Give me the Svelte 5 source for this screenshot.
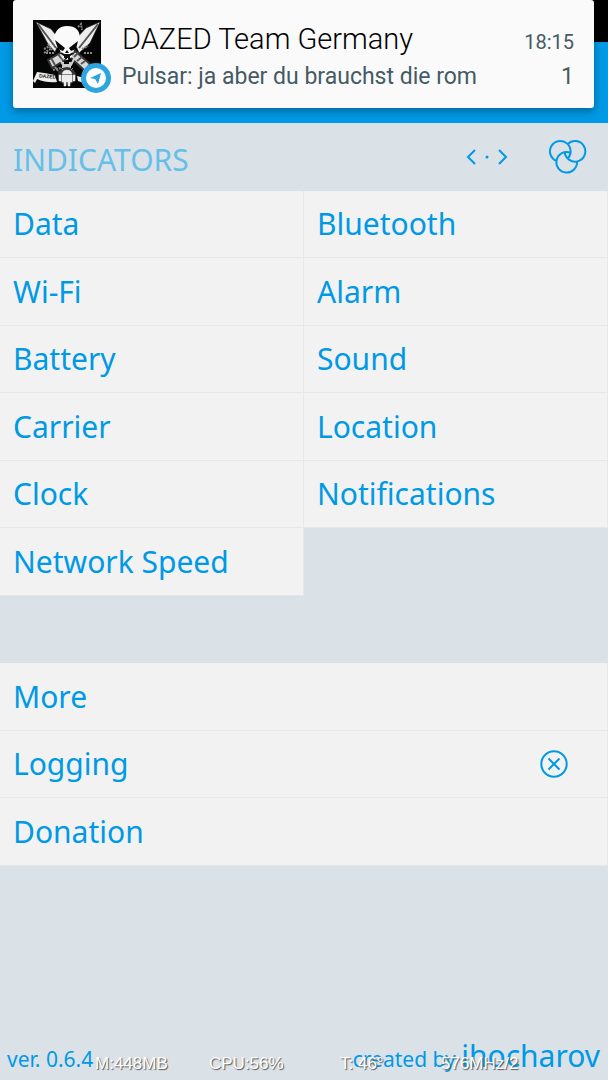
<script>
    const left = ["Data", "Wi-Fi", "Battery", "Carrier", "Clock", "Network Speed"];
    const right = ["Bluetooth", "Alarm", "Sound", "Location", "Notifications"];
    let logging = false;
</script>

<div class="screen">
    <div class="statusbar"></div>
    <div class="actionbar"></div>

    <header class="section">
        <h1>INDICATORS</h1>
        <button class="icon" aria-label="Spacing">
            <svg width="42" height="20" viewBox="0 0 42 20">
                <path d="M9 3 2 10l7 7M33 3l7 7-7 7" />
                <circle class="dot" cx="21" cy="10" r="1.5" />
            </svg>
        </button>
        <button class="icon" aria-label="Colors">
            <svg width="39" height="36" viewBox="0 0 39 36">
                <path d="M8.5 21.9A10.3 10.3 0 1 1 19.65 19.5" />
                <path d="M19.65 5.1A10.3 10.3 0 1 1 16.74 13.2" />
                <path d="M28.96 22.4A10.3 10.3 0 1 1 22.5 13.7" />
            </svg>
        </button>
    </header>

    <main>
        <div class="columns">
            <div class="list">
                {#each left as item}
                    <button class="row">{item}</button>
                {/each}
            </div>
            <div class="list">
                {#each right as item}
                    <button class="row">{item}</button>
                {/each}
            </div>
        </div>

        <div class="list more">
            <button class="row">More</button>
            <button class="row" aria-pressed={logging} on:click={() => (logging = !logging)}>
                Logging
                <svg width="28" height="28" viewBox="0 0 28 28">
                    <circle cx="14" cy="14" r="12.7" />
                    {#if logging}
                        <path d="m8 14 4 4 8-8" />
                    {:else}
                        <path d="m8.500 8.500 11 11M19.500 8.500l-11 11" />
                    {/if}
                </svg>
            </button>
            <button class="row">Donation</button>
        </div>
    </main>

    <footer>
        <span>ver. 0.6.4</span>
        <span>created by <b>ihocharov</b></span>
    </footer>

    <div class="stats">
        <span>M:448MB</span>
        <span>CPU:56%</span>
        <span>T: 46°</span>
        <span>576MHz/2</span>
    </div>

    <div class="notification">
        <div class="avatar">
            <svg width="80" height="76" viewBox="0 0 80 76">
                <rect width="68" height="68" fill="#050505" />
                <!-- knives -->
                <g fill="#eee" stroke="#222" stroke-width="0.6">
                    <path d="M3 2 18 9 27 20 22 32 15 24Z" />
                    <path d="M67 2 53 8 41 21 46 33 57 23Z" />
                </g>
                <path d="m5 4 18 24M65 4 46 28" stroke="#555" fill="none" />
                <g fill="#d8d8d8" stroke="#333">
                    <path d="m15 40 14-8 6 6-16 10Z" />
                    <path d="m42 31 15 13-5 7-15-14Z" />
                </g>
                <path d="m18 38 4 7m3-11 5 7m15-8-4 4m8 0-5 4m8 0-4 3" stroke="#555" fill="none" />
                <!-- skull -->
                <path d="M21 18Q23 6 34 6q13 0 13 13 0 6-6 11l-2 7-5 3-5-3-2-7q-7-5-6-12Z" fill="#fafafa" />
                <path d="m22 20 10 8-2 3-5-2ZM45 21l-9 7 2 3 5-2ZM34 30l-2 3h4Z" fill="#090909" />
                <path d="m28 33 3 2h6l3-2M31 37h6M33 35v4m3-4v4" stroke="#111" fill="none" />
                <path d="M30 42v5h7v-5M27 39l3 6h8l3-6" stroke="#ccc" fill="none" />
                <path d="m11 29 6-3m-6 7 8-5m-6 5 8 0m-6-9 4 6m30-1 6-3m-4 7 8 0M45 7l3-3 1 6M20 50l8-2m-6-1 4 5" stroke="#888" fill="none" stroke-dasharray="2 1" />
                <!-- banner and robot -->
                <path d="m0 61 4-9q9 1 18 3l2 7q-11 1-20-3l-2 4Z" fill="#eee" />
                <text x="6" y="58" fill="#111" transform="rotate(4 13 58)">DAZED</text>
                <path d="M44 56q8 3 16-2l7 8q-12 4-22-1Z" fill="#eee" />
                <circle cx="34" cy="56" r="9" fill="#333" />
                <path d="M29 54q1-4 5-4t5 4ZM29 55h10v7h-2v4h-2v-4h-2v4h-2v-4h-2ZM26 55h2v6h-2Zm14 0h2v6h-2ZM30 50l-2-2m10 2 2-2" fill="#eee" stroke="#eee" stroke-width="0.5" />
                <!-- app badge -->
                <circle cx="63" cy="58" r="15" fill="#2ca5e0" />
                <circle cx="63" cy="58" r="10" fill="#fff" />
                <path d="m57 58 11-5-3 11-3-5Z" fill="#2ca5e0" />
            </svg>
        </div>
        <div class="message">
            <div class="line title">
                <span>DAZED Team Germany</span>
                <time>18:15</time>
            </div>
            <div class="line">
                <span>Pulsar: ja aber du brauchst die rom</span>
                <span>1</span>
            </div>
        </div>
    </div>
</div>

<style>
    :global(body) {
        background: #dae2e8;
    }
    .screen {
        position: relative;
        display: flex;
        flex-direction: column;
        min-height: 100vh;
        background: #dae2e8;
        color: #0099e5;
        font-family: "Noto Sans", "Open Sans", sans-serif;
    }
    .statusbar {
        height: 42px;
        background: #000;
    }
    .actionbar {
        height: 81px;
        background: #0099e5;
    }
    .section {
        display: flex;
        align-items: center;
        height: 6.25vh;
        padding: 0 21px 0 13px;
        box-sizing: border-box;
    }
    h1 {
        flex: 1;
        margin: 0;
        padding-top: 6px;
        color: #66bfe9;
        font-size: 30px;
        font-weight: 400;
        line-height: 40px;
    }
    button {
        border: 0;
        background: none;
        color: inherit;
        font-family: inherit;
        cursor: pointer;
    }
    .icon {
        display: flex;
        padding: 0;
        margin-left: 40px;
    }
    svg {
        flex: none;
        fill: none;
        stroke: #0099e5;
        stroke-width: 2;
    }
    .dot {
        fill: #0099e5;
        stroke: none;
    }
    .columns {
        display: grid;
        grid-template-columns: 1fr 1fr;
        align-items: start;
    }
    .row {
        display: flex;
        align-items: center;
        justify-content: space-between;
        width: 100%;
        height: 6.25vh;
        padding: 0 39px 0 13px;
        border-right: 1px solid #e3e8ea;
        border-bottom: 1px solid #e3e8ea;
        background: #f2f2f2;
        font-size: 30px;
        text-align: left;
        white-space: nowrap;
    }
    .more {
        margin-top: 6.25vh;
    }
    footer {
        display: flex;
        justify-content: space-between;
        align-items: baseline;
        margin-top: auto;
        padding: 0 8px 4px 7px;
        font-size: 21px;
    }
    b {
        font-size: 30px;
        font-weight: 400;
    }
    .stats {
        position: absolute;
        bottom: 6px;
        left: 95px;
        display: grid;
        grid-template-columns: 114px 131px 101px auto;
        color: #fff;
        font-family: "Liberation Sans", Arial, sans-serif;
        font-size: 17px;
        line-height: 20px;
        text-shadow: 1px 1px 1px #555;
        pointer-events: none;
    }
    .notification {
        position: absolute;
        top: 0;
        left: 13px;
        right: 14px;
        display: flex;
        height: 108px;
        padding: 20px 20px 0 20px;
        box-sizing: border-box;
        border-radius: 3px;
        background: #fafafa;
        box-shadow: 0 3px 8px rgba(0, 0, 0, 0.35);
        color: #455a64;
        font-family: Roboto, sans-serif;
        font-weight: 400;
    }
    .avatar {
        width: 89px;
    }
    .avatar svg {
        stroke: none;
    }
    .avatar text {
        font: bold 5px "Liberation Sans", sans-serif;
    }
    .message {
        flex: 1;
    }
    .line {
        display: flex;
        justify-content: space-between;
        align-items: baseline;
        font-size: 23px;
        line-height: 32px;
    }
    .title {
        color: #000;
        font-size: 29px;
        font-weight: 300;
        line-height: 38px;
    }
    time {
        color: #455a64;
        font-size: 20px;
        font-weight: 400;
    }
</style>
